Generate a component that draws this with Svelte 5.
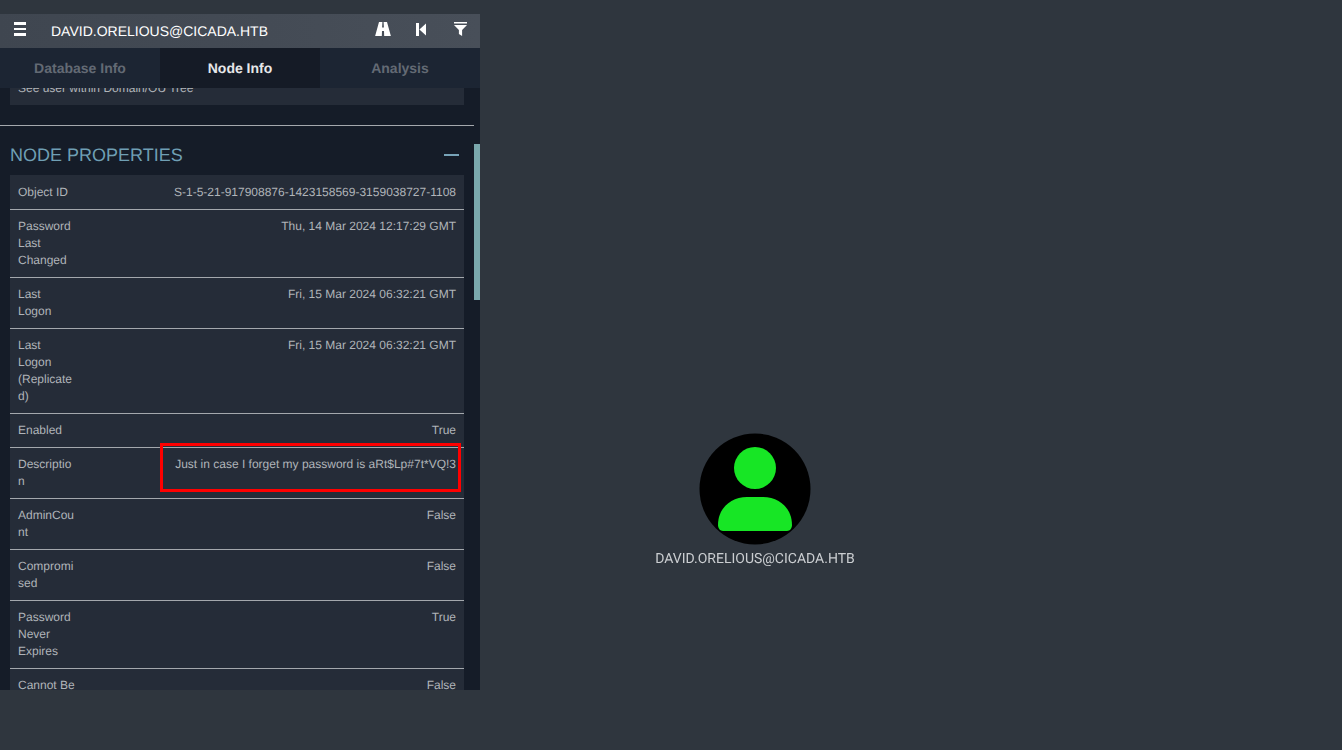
<script>
  const rows = [
    ['Object ID', 'S-1-5-21-917908876-1423158569-3159038727-1108'],
    ['Password Last Changed', 'Thu, 14 Mar 2024 12:17:29 GMT'],
    ['Last Logon', 'Fri, 15 Mar 2024 06:32:21 GMT'],
    ['Last Logon (Replicated)', 'Fri, 15 Mar 2024 06:32:21 GMT'],
    ['Enabled', 'True'],
    ['Description', 'Just in case I forget my password is aRt$Lp#7t*VQ!3'],
    ['AdminCount', 'False'],
    ['Compromised', 'False'],
    ['Password Never Expires', 'True'],
    ['Cannot Be Delegated', 'False']
  ];
</script>

<div class="page">
  <aside class="panel">
    <header class="topbar">
      <div class="menu" aria-label="menu"><span></span><span></span><span></span></div>
      <div class="title">DAVID.ORELIOUS@CICADA.HTB</div>
      <svg class="ic road" viewBox="0 0 16 14.5"><path fill="#fff" d="M4 0H7.4L7.1 5.5H8.9L8.6 0H12L16 14.5H9.2L9 9H7L6.8 14.5H0z"/></svg>
      <svg class="ic back" viewBox="0 0 10 13"><path fill="#fff" d="M0 0h3v13H0zM10 0.5v12L3.4 6.5z"/></svg>
      <svg class="ic filter" viewBox="0.5 0 13 14"><path fill="#fff" d="M0.5 0h13v1.6H0.5zM0.5 3h13L8.6 8v6L5.4 12V8z"/></svg>
    </header>
    <nav class="tabs">
      <div class="tab">Database Info</div>
      <div class="tab active">Node Info</div>
      <div class="tab">Analysis</div>
    </nav>
    <div class="scroller">
      <div class="content">
        <div class="card">See user within Domain/OU Tree</div>
        <hr />
        <div class="section">
          <h2>NODE PROPERTIES</h2>
          <span class="collapse"></span>
        </div>
        <div class="table">
          {#each rows as [k, v], i}
            <div class="row" class:first={i === 0}>
              <div class="key">{k}</div>
              <div class="val">{v}</div>
            </div>
          {/each}
        </div>
      </div>
      <div class="thumb"></div>
    </div>
  </aside>

  <div class="highlight"></div>

  <div class="node">
    <svg viewBox="0 0 112 112" width="112" height="112">
      <circle cx="56" cy="56" r="55.5" fill="#000" />
      <circle cx="56" cy="35" r="21" fill="#17e625" />
      <path fill="#17e625" d="M19 92C19 75 32 64 48 64H64C80 64 93 75 93 92C93 95 91 98 88 98H24C21 98 19 95 19 92z" />
    </svg>
    <div class="label">DAVID.ORELIOUS@CICADA.HTB</div>
  </div>
</div>

<style>
  :global(body) { margin: 0; background: #2f363e; }
  .page {
    position: relative;
    width: 1342px;
    height: 750px;
    overflow: hidden;
    background: #2f363e;
    padding-top: 14px;
    box-sizing: border-box;
    font-family: "Liberation Sans", Arial, sans-serif;
    text-rendering: geometricPrecision;
  }
  .panel {
    width: 480px;
    height: 676px;
    display: flex;
    flex-direction: column;
    background: #151c28;
  }
  .topbar {
    height: 34px;
    flex: none;
    display: flex;
    align-items: center;
    background: linear-gradient(90deg, #3f4650, #484f59);
    color: #fff;
    box-sizing: border-box;
    padding-left: 13.5px;
  }
  .menu { width: 12.5px; display: flex; flex-direction: column; gap: 2.8px; margin-top: -4px; }
  .menu span { display: block; height: 2.5px; background: #fff; }
  .title { font-size: 14px; margin-left: 25px; flex: 1; }
  .ic { flex: none; display: block; margin-top: -4px; }
  .road { width: 16px; height: 14.5px; margin-right: 25px; }
  .back { width: 10px; height: 13px; margin-right: 28px; }
  .filter { width: 13px; height: 14px; margin-right: 13px; }
  .tabs { display: flex; height: 40px; flex: none; background: #1c2533; }
  .tab {
    flex: 1;
    display: flex;
    align-items: center;
    justify-content: center;
    font-size: 14px;
    font-weight: 700;
    color: #636a74;
  }
  .tab.active { background: #151b26; color: #e6e7e9; }
  .scroller { flex: 1; min-height: 0; overflow: hidden; position: relative; }
  .content { width: 474px; margin-top: -24px; }
  .card {
    margin: 0 10px;
    background: #252c38;
    color: #b0b4b9;
    font-size: 12px;
    line-height: 17px;
    padding: 16px 8px 8px;
    height: 41px;
    box-sizing: border-box;
  }
  hr { border: 0; height: 1px; background: #a4a8ad; margin: 20px 0 0; }
  .section {
    display: flex;
    align-items: center;
    justify-content: space-between;
    height: 49px;
    padding: 10px 15px 0 10px;
    box-sizing: border-box;
  }
  h2 { margin: 0; font-size: 18px; font-weight: 400; color: #6f9fb4; }
  .collapse { width: 15px; height: 2.6px; background: #77a3b8; margin-top: -1px; }
  .table { margin: 0 10px; background: #252c38; }
  .row {
    display: flex;
    justify-content: space-between;
    padding: 8px;
    border-bottom: 1px solid #a4a8ad;
    font-size: 12px;
    line-height: 17px;
    color: #b0b4b9;
  }
  .row.first { padding-top: 9px; }
  .key { width: 58px; flex: none; overflow-wrap: anywhere; }
  .val { text-align: right; white-space: nowrap; }
  .thumb {
    position: absolute;
    right: 0;
    top: 56px;
    width: 6px;
    height: 156px;
    background: #7aa8ad;
  }
  .highlight {
    position: absolute;
    left: 160px;
    top: 443px;
    width: 301px;
    height: 49px;
    box-sizing: border-box;
    border: 3px solid #f00;
  }
  .node {
    position: absolute;
    left: 645px;
    top: 433px;
    width: 220px;
    display: flex;
    flex-direction: column;
    align-items: center;
  }
  .node svg { display: block; filter: blur(0.5px); }
  .label {
    font-family: Roboto, sans-serif;
    font-size: 14px;
    line-height: 16px;
    margin-top: 6px;
    color: #cbced1;
    white-space: nowrap;
    filter: blur(0.5px);
  }
</style>
